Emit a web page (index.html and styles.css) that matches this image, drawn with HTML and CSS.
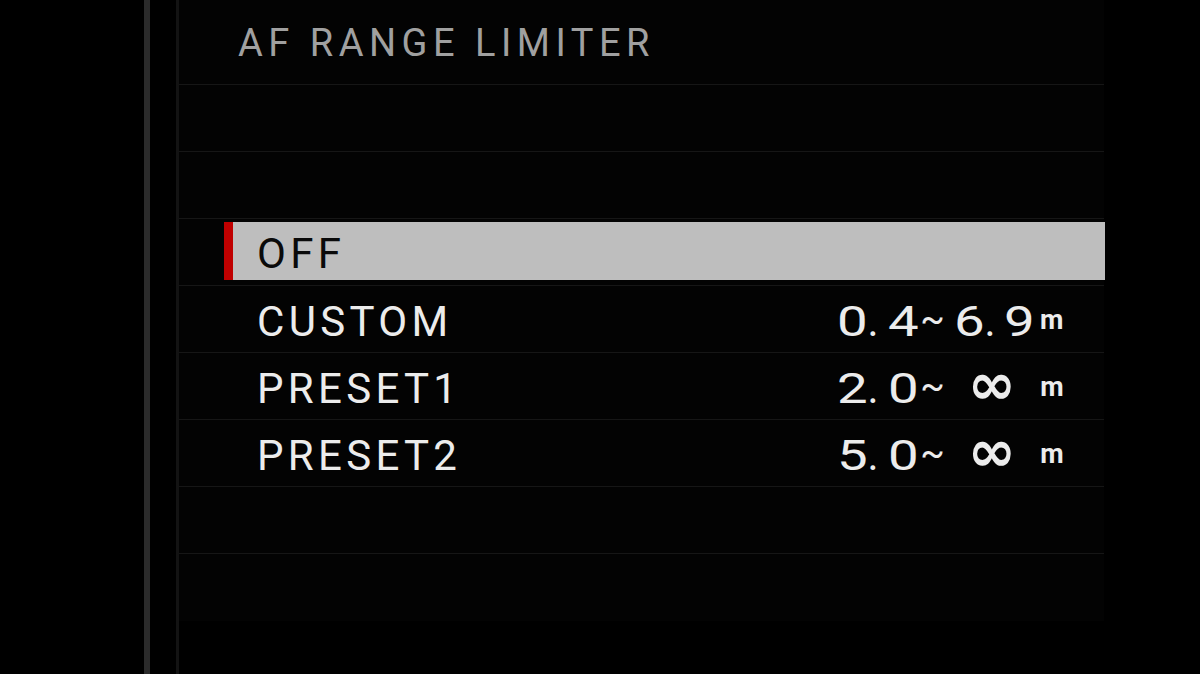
FILE: index.html
```html
<!DOCTYPE html>
<html>
<head>
<meta charset="utf-8">
<link rel="stylesheet" href="styles.css">
</head>
<body>
<div class="screen">
  <div class="gutter"></div>
  <div class="stripe"></div>
  <div class="gap"></div>
  <div class="edge"></div>
  <div class="panel">
    <div class="title-row"><span class="title">AF RANGE LIMITER</span></div>
    <div class="row"></div>
    <div class="row"></div>
    <div class="row selected"><div class="hl"><span class="label">OFF</span></div></div>
    <div class="row">
      <span class="label">CUSTOM</span>
      <span class="value"><span class="d">0</span><span class="p">.</span><span class="d">4</span><span class="t">~</span><span class="d">6</span><span class="p">.</span><span class="d">9</span><span class="u">m</span></span>
    </div>
    <div class="row">
      <span class="label">PRESET1</span>
      <span class="value"><span class="d">2</span><span class="p">.</span><span class="d">0</span><span class="t">~</span><span class="inf">∞</span><span class="u ui">m</span></span>
    </div>
    <div class="row">
      <span class="label">PRESET2</span>
      <span class="value"><span class="d">5</span><span class="p">.</span><span class="d">0</span><span class="t">~</span><span class="inf">∞</span><span class="u ui">m</span></span>
    </div>
    <div class="row"></div>
    <div class="row last"></div>
  </div>
</div>
</body>
</html>
```
FILE: styles.css
```css
html, body {
  margin: 0;
  padding: 0;
  background: #000;
  width: 1200px;
  height: 674px;
  overflow: hidden;
  font-family: Roboto, "Liberation Sans", sans-serif;
}
.screen {
  display: flex;
  height: 674px;
}
.gutter { width: 144px; flex: none; }
.stripe { width: 6px; flex: none; background: #2b2b2b; }
.gap { width: 26px; flex: none; }
.edge { width: 3px; flex: none; background: #131313; }
.panel {
  width: 925px;
  flex: none;
  height: 621px;
  background: #030303;
  display: flex;
  flex-direction: column;
}
.title-row {
  flex: none;
  height: 85px;
  border-bottom: 1px solid #161616;
  display: flex;
  align-items: center;
  padding-left: 59px;
  padding-top: 2px;
  box-sizing: border-box;
}
.title {
  font-size: 38px;
  color: #a0a0a0;
  letter-spacing: 5.5px;
  font-weight: 400;
}
.row {
  height: 67px;
  flex: none;
  border-bottom: 1px solid #161616;
  display: flex;
  align-items: center;
  padding-left: 78px;
  padding-right: 36px;
  padding-top: 5px;
  box-sizing: border-box;
}
.row.last { border-bottom: none; }
.label {
  font-size: 42px;
  color: #ececec;
  letter-spacing: 4.3px;
}
.row.selected {
  padding-left: 45px;
  padding-right: 0;
  align-items: flex-start;
  padding-top: 3px;
}
.hl {
  flex: 1;
  height: 58px;
  background: #bebebe;
  border-left: 9px solid #c00000;
  display: flex;
  align-items: center;
  padding-left: 24px;
  padding-top: 4px;
  box-sizing: border-box;
  margin-right: -1px;
}
.hl .label { color: #0a0a0a; }
.value {
  margin-left: auto;
  width: 231px;
  font-size: 42px;
  color: #ececec;
  white-space: nowrap;
}
.d {
  display: inline-block;
  transform: scaleX(1.3);
  transform-origin: left center;
}
.p {
  display: inline-block;
  margin: 0 9px 0 7px;
}
.t {
  display: inline-block;
  font-size: 36px;
  vertical-align: 5px;
  margin: 0 9px 0 9px;
}
.inf {
  display: inline-block;
  font-family: "DejaVu Sans", sans-serif;
  font-weight: 700;
  font-size: 58px;
  line-height: 40px;
  vertical-align: -1px;
  margin-left: 14px;
}
.u {
  display: inline-block;
  font-size: 27px;
  font-weight: 700;
  vertical-align: 7px;
  margin-left: 12px;
}
.ui { margin-left: 24px; }
```
